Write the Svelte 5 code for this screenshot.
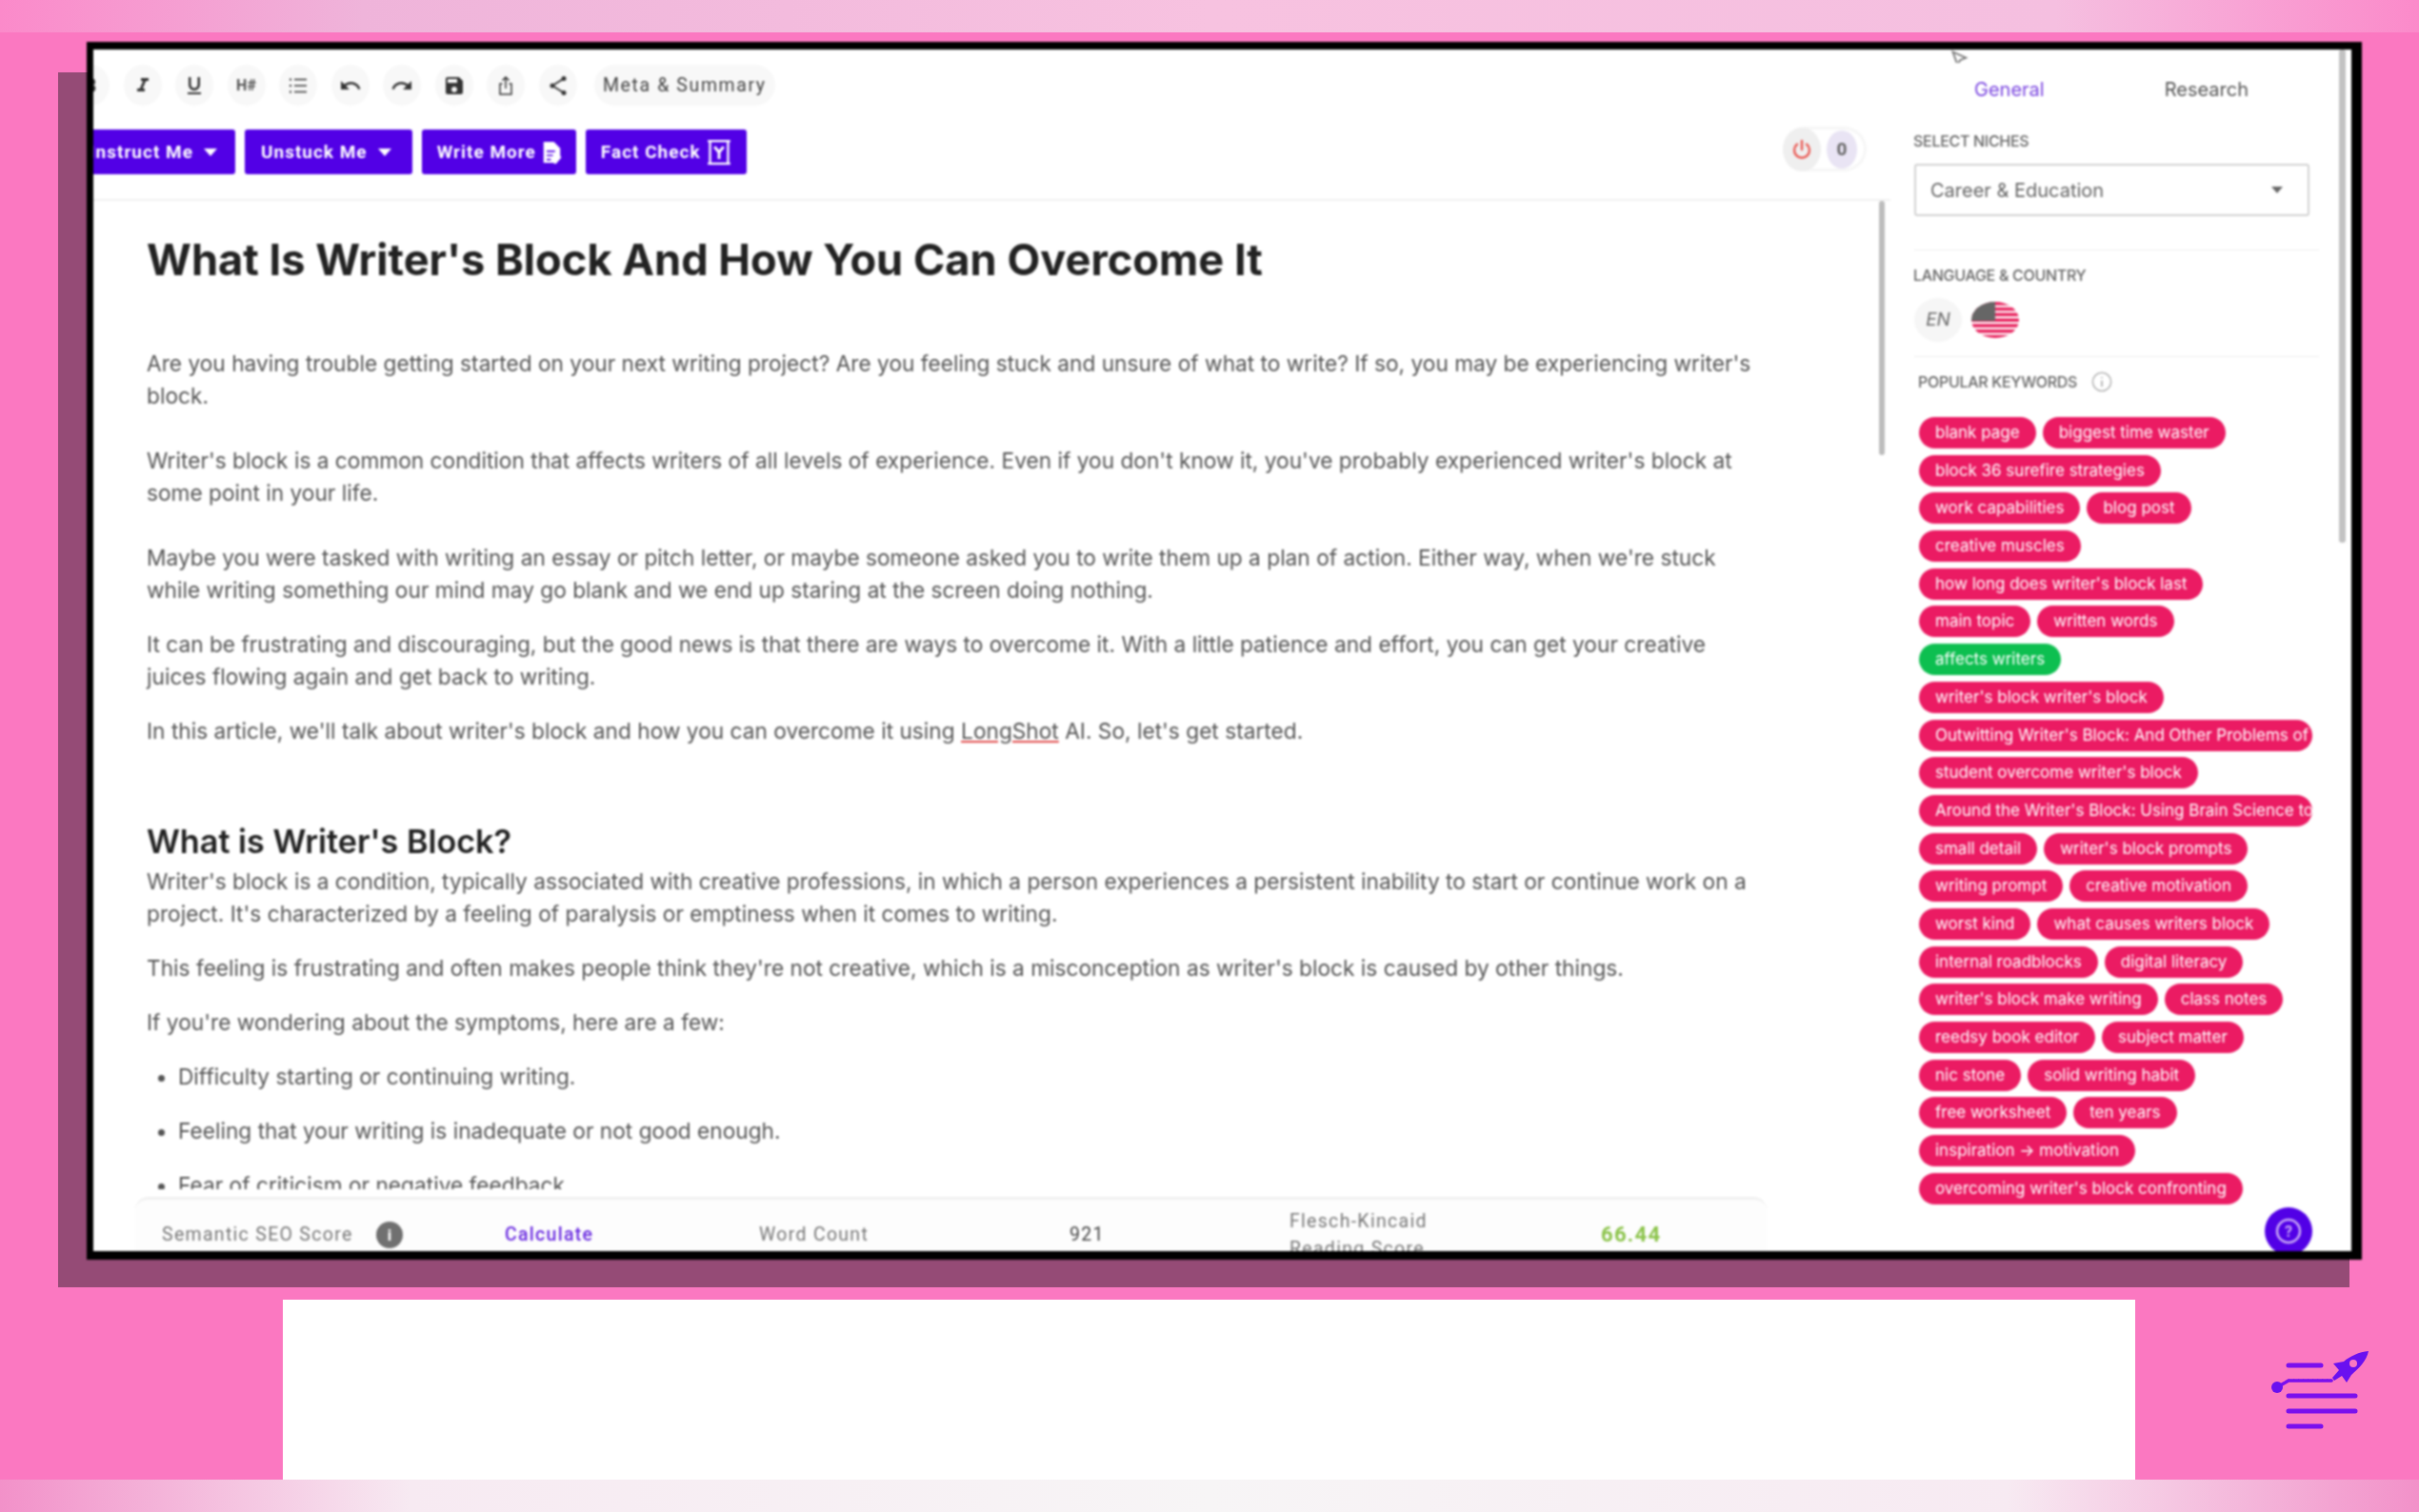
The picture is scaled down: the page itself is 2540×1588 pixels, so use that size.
<script>
	const paras1 = [
		"Are you having trouble getting started on your next writing project? Are you feeling stuck and unsure of what to write? If so, you may be experiencing writer's block.",
		"Writer's block is a common condition that affects writers of all levels of experience. Even if you don't know it, you've probably experienced writer's block at some point in your life.",
		"Maybe you were tasked with writing an essay or pitch letter, or maybe someone asked you to write them up a plan of action. Either way, when we're stuck while writing something our mind may go blank and we end up staring at the screen doing nothing."
	]
	const keywords = [
		'blank page', 'biggest time waster', 'block 36 surefire strategies', 'work capabilities', 'blog post',
		'creative muscles', "how long does writer's block last", 'main topic', 'written words', 'affects writers',
		"writer's block writer's block", "Outwitting Writer's Block: And Other Problems of the Creative Life",
		"student overcome writer's block", "Around the Writer's Block: Using Brain Science to Solve Writer's Resistance",
		'small detail', "writer's block prompts", 'writing prompt', 'creative motivation', 'worst kind',
		'what causes writers block', 'internal roadblocks', 'digital literacy', "writer's block make writing",
		'class notes', 'reedsy book editor', 'subject matter', 'nic stone', 'solid writing habit', 'free worksheet',
		'ten years', 'inspiration → motivation', "overcoming writer's block confronting"
	]
</script>

<div class="band top"></div>
<div class="stage">
	<div class="shadow"></div>
	<div class="window">
		<div class="main">
			<div class="toolbar">
				<span class="tool bold">B</span>
				<span class="tool"><svg viewBox="0 0 24 24"><path d="M10 4v3h2.210l-3.420 8H6v3h8v-3h-2.210l3.420-8H18V4z"/></svg></span>
				<span class="tool"><svg viewBox="0 0 24 24"><path d="M12 17c3.310 0 6-2.690 6-6V3h-2.500v8c0 1.930-1.570 3.500-3.500 3.500S8.500 12.930 8.500 11V3H6v8c0 3.310 2.690 6 6 6zm-7 2v2h14v-2H5z"/></svg></span>
				<span class="tool hash">H#</span>
				<span class="tool"><svg viewBox="0 0 24 24"><path d="M3 4.500h2v2H3zM3 11h2v2H3zM3 17.500h2v2H3zM8 4.800h13v1.500H8zM8 11.200h13v1.500H8zM8 17.700h13v1.500H8z"/></svg></span>
				<span class="tool"><svg viewBox="0 0 24 24"><path d="M12.500 8c-2.650 0-5.050.99-6.900 2.600L2 7v9h9l-3.620-3.620c1.390-1.160 3.160-1.880 5.120-1.880 3.540 0 6.550 2.310 7.600 5.500l2.370-.78C21.080 11.030 17.150 8 12.500 8z"/></svg></span>
				<span class="tool"><svg viewBox="0 0 24 24"><path d="M18.400 10.600C16.550 8.990 14.150 8 11.500 8c-4.650 0-8.580 3.030-9.960 7.220L3.900 16c1.050-3.190 4.050-5.500 7.600-5.500 1.950 0 3.730.72 5.120 1.880L13 16h9V7l-3.600 3.600z"/></svg></span>
				<span class="tool"><svg viewBox="0 0 24 24"><path d="M17 3H5c-1.110 0-2 .9-2 2v14c0 1.100.89 2 2 2h14c1.100 0 2-.9 2-2V7l-4-4zm-5 16c-1.660 0-3-1.340-3-3s1.340-3 3-3 3 1.340 3 3-1.340 3-3 3zm3-10H5V5h10v4z"/></svg></span>
				<span class="tool"><svg class="line" viewBox="0 0 24 24"><path d="M12 15V3M8.500 6.500 12 3l3.500 3.500M8.500 10H6v11h12V10h-2.500"/></svg></span>
				<span class="tool"><svg viewBox="0 0 24 24"><circle cx="18" cy="4.500" r="2.500"/><circle cx="6" cy="12" r="2.500"/><circle cx="18" cy="19.500" r="2.500"/><path d="M18 4.500 6 12l12 7.500" fill="none" stroke="#333" stroke-width="1.800"/></svg></span>
				<span class="meta">Meta &amp; Summary</span>
			</div>

			<div class="actions">
				<div class="btn">Instruct Me <i class="caret"></i></div>
				<div class="btn wider">Unstuck Me <i class="caret"></i></div>
				<div class="btn slim">Write More
					<svg viewBox="0 0 18 22"><path fill="#fff" d="M1 1h10l6 6v7l-5 7H1z"/><path stroke="#5200e6" stroke-width="1.500" d="M4 10h8M4 14h6M4 18h4"/><path fill="#fff" d="M17 14l1 2-5 6-2 0 0-2z"/></svg>
				</div>
				<div class="btn slim fact">Fact Check
					<svg viewBox="0 0 22 22"><path fill="none" stroke="#fff" stroke-width="2" d="M3 1h16v20H3zM1 1h20M1 21h20"/><path fill="none" stroke="#fff" stroke-width="2.500" d="M7 6l4 5 4-5M11 11v6"/></svg>
				</div>
				<div class="power">
					<span class="pw"><svg viewBox="0 0 24 24"><path fill="none" stroke="#ea5b55" stroke-width="2.400" stroke-linecap="round" d="M12 3v9M7 6.500a8 8 0 1 0 10 0"/></svg></span>
					<span class="zero">0</span>
				</div>
			</div>

			<div class="editor">
				<div class="doc">
					<h1>What Is Writer's Block And How You Can Overcome It</h1>
					{#each paras1 as p, i}
						<p class:wide={i < 2}>{p}</p>
					{/each}
					<p>It can be frustrating and discouraging, but the good news is that there are ways to overcome it. With a little patience and effort, you can get your creative juices flowing again and get back to writing.</p>
					<p>In this article, we'll talk about writer's block and how you can overcome it using <u>LongShot</u> AI. So, let's get started.</p>
					<h2>What is Writer's Block?</h2>
					<p>Writer's block is a condition, typically associated with creative professions, in which a person experiences a persistent inability to start or continue work on a project. It's characterized by a feeling of paralysis or emptiness when it comes to writing.</p>
					<p>This feeling is frustrating and often makes people think they're not creative, which is a misconception as writer's block is caused by other things.</p>
					<p>If you're wondering about the symptoms, here are a few:</p>
					<ul>
						<li>Difficulty starting or continuing writing.</li>
						<li>Feeling that your writing is inadequate or not good enough.</li>
						<li>Fear of criticism or negative feedback.</li>
					</ul>
				</div>
				<div class="scroll"></div>
			</div>

			<div class="stats">
				<span class="s-label">Semantic SEO Score</span>
				<span><span class="info">i</span></span>
				<span class="calc">Calculate</span>
				<span>Word Count</span>
				<span class="num">921</span>
				<span class="fk">Flesch-Kincaid<br />Reading Score</span>
				<span class="score">66.44</span>
			</div>
		</div>

		<aside>
			<div class="cursor"><svg viewBox="0 0 16 16"><path fill="none" stroke="#777" stroke-width="1.500" d="M2 2l4 11 2-4 5-2z"/></svg></div>
			<div class="tabs">
				<span class="active">General</span>
				<span>Research</span>
			</div>
			<div class="label">SELECT NICHES</div>
			<div class="select">Career &amp; Education <i class="caret dark"></i></div>
			<hr />
			<div class="label">LANGUAGE &amp; COUNTRY</div>
			<div class="lang">
				<span class="en">EN</span>
				<svg class="flag" viewBox="0 0 50 38">
					<defs><clipPath id="fl"><ellipse cx="25" cy="19" rx="25" ry="19" /></clipPath></defs>
					<g clip-path="url(#fl)">
						<rect width="50" height="38" fill="#fff" />
						{#each [0, 1, 2, 3, 4, 5, 6] as n}
							<rect y={n * 5.8} width="50" height="3.600" fill="#e8245f" />
						{/each}
						<rect width="25" height="20" fill="#666" />
					</g>
				</svg>
			</div>
			<hr class="second" />
			<div class="label pop">POPULAR KEYWORDS
				<svg viewBox="0 0 24 24"><circle cx="12" cy="12" r="10.500" fill="none" stroke="#aaa" stroke-width="1.500"/><path d="M12 10.500v7M12 6.500v1.500" stroke="#aaa" stroke-width="1.800"/></svg>
			</div>
			<div class="chips">
				{#each keywords as k}
					<span class="chip" class:green={k === 'affects writers'}>{k}</span>
				{/each}
			</div>
			<div class="thumb"></div>
			<div class="help">
				<svg viewBox="0 0 30 30"><circle cx="15" cy="15" r="12" fill="none" stroke="#c9a9f5" stroke-width="2.500"/><text x="15" y="21" text-anchor="middle" fill="#c9a9f5" font-size="16" font-weight="700" font-family="Roboto, sans-serif">?</text></svg>
			</div>
		</aside>
	</div>
</div>
<div class="lower">
	<div class="blank"></div>
	<svg class="logo" viewBox="0 0 102 85">
		<g stroke="#7a10ee" stroke-width="5" stroke-linecap="round" fill="none">
			<path d="M18 17h34M18 49h70M18 65h70M18 81h34" />
			<path stroke-width="3.500" stroke-dasharray="4 1" d="M6 40l12-7h46" />
		</g>
		<circle cx="6" cy="40" r="6" fill="#6a10f0" />
		<path fill="#6a10f0" d="M102 2C92 3 83 7 76 13L65 15l6 7-7 8 2 3 8-5 5 7 5-8c8-7 16-15 18-25z" />
		<circle cx="86" cy="15" r="4" fill="#fb78c1" />
	</svg>
</div>
<div class="band bottom"></div>

<style>
	:global(body){
		margin: 0;
		background: #fb78c1;
	}
	.band{
		height: 34px;
	}
	.band.top{
		background: linear-gradient(90deg, #fb8aca 0%, #efb4da 15%, #f7c2e0 50%, #f5bfe0 85%, #fb8aca 100%);
	}
	.band.bottom{
		background: linear-gradient(90deg, #f291c9 0%, #f7eaf2 17%, #f7f5f6 50%, #f7eaf2 83%, #f291c9 100%);
	}
	.stage{
		position: relative;
		height: 1289px;
		padding: 10px 0 0 91px;
		box-sizing: border-box;
	}
	.shadow{
		position: absolute;
		left: 61px;
		top: 42px;
		width: 2406px;
		height: 1276px;
		background: #954b76;
	}
	.window{
		position: relative;
		width: 2389px;
		height: 1279px;
		box-sizing: border-box;
		background: #fff;
		border: solid #000;
		border-width: 8px 11px 9px 7px;
		display: flex;
		overflow: hidden;
		font-family: Inter, "Liberation Sans", sans-serif;
		filter: blur(0.8px);
	}
	.main{
		width: 1887px;
		flex: none;
		height: 100%;
		display: flex;
		flex-direction: column;
		overflow: hidden;
	}
	.toolbar{
		display: flex;
		align-items: center;
		gap: 14.500px;
		height: 43px;
		margin: 16px 0 0 -23px;
		flex: none;
	}
	.tool{
		width: 40px;
		height: 43px;
		flex: none;
		border-radius: 50%;
		background: #f8f8f8;
		display: flex;
		align-items: center;
		justify-content: center;
		color: #333;
		font-family: Roboto, sans-serif;
	}
	.tool svg{
		width: 24px;
		height: 24px;
		fill: #333;
	}
	.tool svg.line{
		fill: none;
		stroke: #333;
		stroke-width: 1.500;
	}
	.tool.bold{
		font-weight: 700;
		font-size: 20px;
	}
	.tool.hash{
		font-size: 16px;
		font-weight: 700;
		color: #555;
	}
	.meta{
		background: #f8f8f8;
		border-radius: 22px;
		height: 43px;
		padding: 0 9px;
		margin-left: 4px;
		font: 400 19.500px/43px Roboto, sans-serif;
		letter-spacing: 1.600px;
		color: #444;
	}
	.actions{
		display: flex;
		align-items: center;
		gap: 10px;
		height: 47px;
		margin: 25px 0 0 -21px;
		flex: none;
	}
	.btn{
		background: #5200e6;
		color: #fff;
		height: 47px;
		border-radius: 3px;
		display: flex;
		align-items: center;
		justify-content: center;
		gap: 7px;
		padding: 0 19px 0 17px;
		font: 700 19px Roboto, sans-serif;
		letter-spacing: 1px;
	}
	.btn.wider{
		padding-right: 22px;
	}
	.btn.slim{
		gap: 6px;
		padding: 0 15px 0 16px;
	}
	.btn svg{
		width: 21px;
		height: 24px;
	}
	.btn.fact{
		padding-right: 16px;
	}
	.btn.fact svg{
		width: 26px;
		height: 28px;
	}
	.caret{
		width: 0;
		height: 0;
		border: 7px solid transparent;
		border-top: 8px solid #fff;
		border-bottom: 0;
		margin-left: 4px;
	}
	.power{
		margin: -6px 25px 0 auto;
		display: flex;
		align-items: center;
		height: 47px;
		width: 88px;
		border-radius: 24px;
		box-shadow: inset 0 0 0 3px #f6f6f6;
	}
	.pw{
		width: 40px;
		height: 46px;
		border-radius: 50%;
		background: #efefef;
		display: flex;
		align-items: center;
		justify-content: center;
	}
	.pw svg{
		width: 24px;
		height: 24px;
	}
	.zero{
		width: 32px;
		height: 40px;
		margin-left: 6px;
		border-radius: 50%;
		background: #e9e4f4;
		color: #666;
		text-align: center;
		font: 700 19px/40px Roboto, sans-serif;
	}
	.editor{
		margin-top: 26px;
		border-top: 2px solid #f1f1f1;
		flex: none;
		height: 1038px;
		position: relative;
		overflow: hidden;
	}
	.doc{
		padding: 0 140px 0 56px;
		color: #555;
		font-size: 22.700px;
		line-height: 34px;
	}
	.scroll{
		position: absolute;
		right: 6px;
		top: 0;
		width: 6px;
		height: 267px;
		border-radius: 3px;
		background: #bdbdbd;
	}
	h1{
		margin: 0;
		padding-top: 34px;
		font-size: 45.200px;
		line-height: 56px;
		font-weight: 700;
		color: #222;
		white-space: nowrap;
	}
	p{
		margin: 0 0 23px;
	}
	p.wide{
		margin-bottom: 34px;
	}
	h1 + p{
		margin-top: 64px;
	}
	h2{
		margin: 77px 0 3px;
		font-size: 34.200px;
		line-height: 44px;
		font-weight: 600;
		color: #222;
	}
	u{
		text-decoration-color: #e04b4b;
	}
	ul{
		margin: 0;
		padding-left: 33px;
	}
	li{
		margin-bottom: 23px;
	}
	.stats{
		flex: 1;
		min-height: 0;
		margin: 8px 130px 0 44px;
		padding: 19px 0 0 28px;
		border-top: 3px solid #f1f1f1;
		border-radius: 14px 14px 0 0;
		background: #fdfdfd;
		display: grid;
		grid-template-columns: 225px 135px 267px 326px 231px 327px 1fr;
		grid-auto-rows: 35px;
		align-items: center;
		font: 400 19.500px Roboto, sans-serif;
		letter-spacing: 1.300px;
		color: #777;
		overflow: hidden;
	}
	.s-label{
		white-space: nowrap;
	}
	.info{
		display: block;
		width: 28px;
		height: 28px;
		background: #707070;
		color: #fff;
		font-weight: 700;
		font-size: 17px;
		line-height: 28px;
		text-align: center;
		border-radius: 50%;
		letter-spacing: 0;
	}
	.calc{
		color: #6a2be0;
		font-weight: 500;
	}
	.num{
		color: #444;
	}
	.fk{
		line-height: 29px;
		white-space: nowrap;
	}
	.score{
		color: #8bc34a;
		font-weight: 700;
		font-size: 22px;
	}
	aside{
		flex: 1;
		position: relative;
		min-width: 0;
		padding: 0 0 0 25px;
		overflow: hidden;
	}
	.cursor{
		position: absolute;
		left: 63px;
		top: 0;
		width: 20px;
		height: 14px;
		overflow: hidden;
	}
	.thumb{
		position: absolute;
		top: 0;
		right: 6px;
		width: 7px;
		height: 518px;
		border-radius: 3px;
		background: #c2c2c2;
	}
	.tabs{
		display: flex;
		font-size: 20px;
		color: #555;
		margin-top: 29px;
		line-height: 26px;
		padding-left: 63px;
		gap: 126px;
	}
	.active{
		color: #7a45e0;
	}
	.label{
		font-size: 16px;
		font-weight: 500;
		line-height: 20px;
		color: #666;
		letter-spacing: -.3px;
		margin-left: -1px;
	}
	.tabs + .label{
		margin-top: 31px;
	}
	.select{
		width: 415px;
		height: 55px;
		margin-top: 14px;
		box-sizing: border-box;
		border: 2px solid #d2d2d2;
		border-radius: 3px;
		display: flex;
		align-items: center;
		justify-content: space-between;
		padding: 0 26px 0 15px;
		font-size: 20px;
		color: #666;
	}
	.caret.dark{
		border-top-color: #666;
		border-width: 7px 6px 0;
	}
	hr{
		border: 0;
		border-top: 1px solid #eee;
		margin: 35px 0 16px;
		width: 425px;
	}
	.lang{
		display: flex;
		align-items: center;
		gap: 10px;
		margin-top: 14px;
		height: 46px;
	}
	.en{
		width: 50px;
		height: 46px;
		border-radius: 50%;
		background: #f6f6f6;
		font-style: italic;
		font-size: 19px;
		line-height: 46px;
		text-align: center;
		color: #666;
	}
	.flag{
		width: 50px;
		height: 38px;
	}
	hr.second{
		margin: 15px 0 15px;
	}
	.label.pop{
		padding-left: 5px;
		display: flex;
		align-items: center;
		gap: 15px;
	}
	.pop svg{
		width: 22px;
		height: 22px;
	}
	.chips{
		display: flex;
		flex-wrap: wrap;
		align-content: flex-start;
		gap: 6.700px 7px;
		margin: 26px 0 0 5px;
		width: 405px;
		padding-right: 10px;
		height: 827px;
		overflow: hidden;
	}
	.chip{
		height: 33px;
		max-width: 413px;
		flex: none;
		box-sizing: border-box;
		padding: 0 17px;
		border-radius: 17px;
		background: #eb1b63;
		color: #fff;
		font-size: 17px;
		line-height: 32px;
		white-space: nowrap;
		overflow: hidden;
	}
	.chip.green{
		background: #0dbf50;
	}
	.help{
		position: absolute;
		left: 393px;
		bottom: -4px;
		width: 50px;
		height: 50px;
		border-radius: 50%;
		background: #5200e6;
		display: flex;
		align-items: center;
		justify-content: center;
	}
	.help svg{
		width: 30px;
		height: 30px;
	}
	.lower{
		height: 231px;
		box-sizing: border-box;
		padding-top: 42px;
		display: flex;
	}
	.blank{
		width: 1945px;
		margin-left: 297px;
		height: 189px;
		background: #fff;
	}
	.logo{
		width: 102px;
		height: 85px;
		margin: 52px 0 0 143px;
		overflow: visible;
	}
</style>
